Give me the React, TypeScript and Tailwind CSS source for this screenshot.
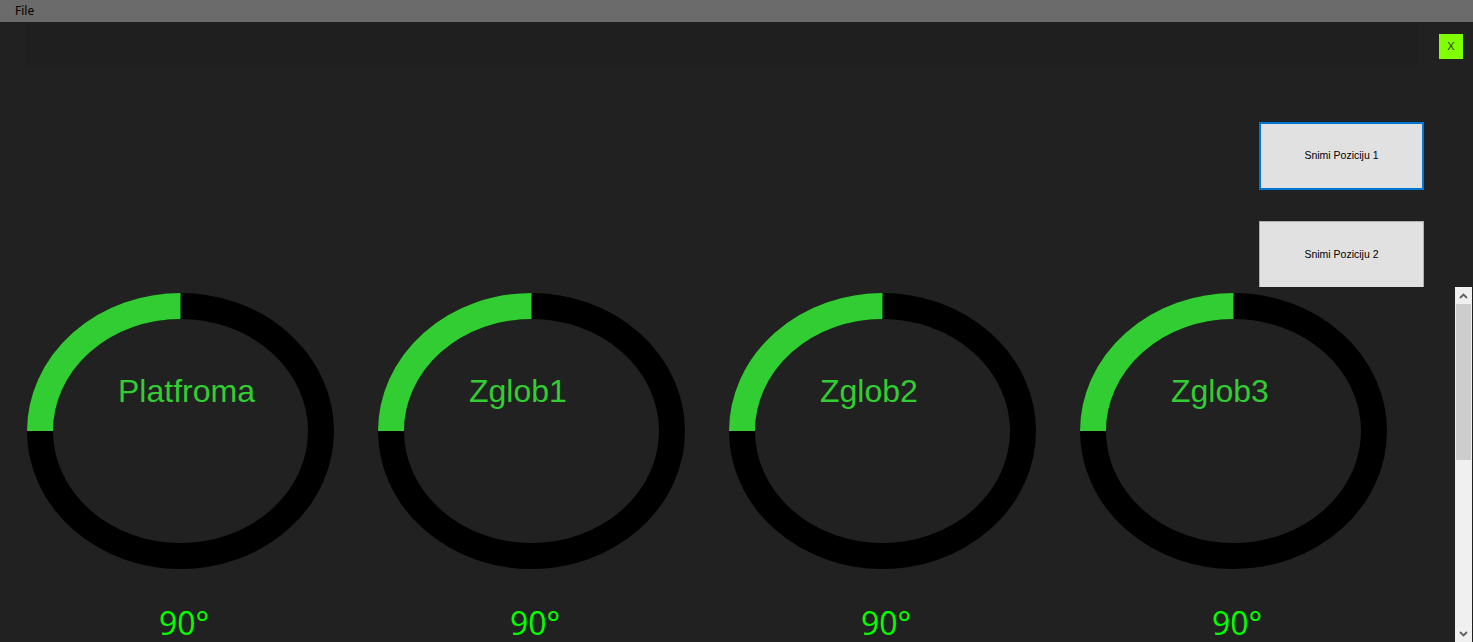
import React from "react";

const GREEN = "#32cd32";

function Gauge({ label }: { label: string }) {
  const w = 307;
  const h = 276;
  const cx = w / 2;
  const cy = h / 2;
  const rx = cx - 13;
  const ry = cy - 13;
  return (
    <div className="w-[351px] shrink-0 flex flex-col">
      <div className="relative w-[307px] h-[276px]">
        <svg className="absolute inset-0" width={w} height={h} viewBox={`0 0 ${w} ${h}`}>
          <ellipse cx={cx} cy={cy} rx={rx} ry={ry} fill="none" stroke="#000" strokeWidth={26} />
          <path
            d={`M ${cx - rx} ${cy} A ${rx} ${ry} 0 0 1 ${cx} ${cy - ry}`}
            fill="none"
            stroke={GREEN}
            strokeWidth={26}
            strokeLinecap="butt"
          />
        </svg>
        <div
          className="relative pt-[82px] pl-[91px] text-[32px] leading-none text-[#32cd32] whitespace-nowrap"
          style={{ fontFamily: '"Liberation Sans", Arial, sans-serif' }}
        >
          {label}
        </div>
      </div>
      <div
        className="mt-[38px] pl-[132px] text-[32px] leading-none text-[#00ff00] whitespace-nowrap"
        style={{ fontFamily: '"Open Sans", "Noto Sans", sans-serif' }}
      >
        90°
      </div>
    </div>
  );
}

function Chevron({ up }: { up: boolean }) {
  return (
    <svg width="9" height="6" viewBox="0 0 9 6">
      <path
        d={up ? "M1 5 L4.5 1.5 L8 5" : "M1 1 L4.5 4.5 L8 1"}
        fill="none"
        stroke="#606060"
        strokeWidth={1.8}
      />
    </svg>
  );
}

export default function App() {
  return (
    <div className="w-[1473px] h-[642px] bg-[#212121] overflow-hidden flex flex-col">
      {/* Menu bar */}
      <div className="h-[22px] shrink-0 bg-[#6b6b6b] flex items-center">
        <span
          className="ml-[15px] text-[12px] text-black leading-none"
          style={{ fontFamily: '"Noto Sans", "Open Sans", sans-serif' }}
        >
          File
        </span>
      </div>

      {/* Top area */}
      <div className="h-[265px] shrink-0 flex flex-col">
        <div className="flex h-[45px]">
          <div className="ml-[25px] w-[1393px] h-[45px] bg-[#1f1f1f]" />
          <button
            className="ml-[21px] mt-[12px] w-[24px] h-[25px] bg-[#7fff00] flex items-center justify-center text-[11px] text-[#333] leading-none"
            style={{ fontFamily: '"Liberation Sans", Arial, sans-serif' }}
          >
            X
          </button>
        </div>
        <div
          className="ml-[1259px] mt-[55px] flex flex-col gap-[31px] text-[10.5px] text-black"
          style={{ fontFamily: '"Liberation Sans", Arial, sans-serif' }}
        >
          <button className="w-[165px] h-[68px] bg-[#e1e1e1] border-2 border-[#0078d7] flex items-center justify-center">
            Snimi Poziciju 1
          </button>
          <button className="w-[165px] h-[66px] bg-[#e1e1e1] border border-b-0 border-[#adadad] flex items-center justify-center pt-[1px]">
            Snimi Poziciju 2
          </button>
        </div>
      </div>

      {/* Gauges panel */}
      <div className="flex-1 flex min-h-0">
        <div className="flex-1 flex pl-[27px] pt-[6px] overflow-hidden">
          <Gauge label="Platfroma" />
          <Gauge label="Zglob1" />
          <Gauge label="Zglob2" />
          <Gauge label="Zglob3" />
        </div>
        <div className="w-[17px] bg-[#f0f0f0] flex flex-col items-center">
          <div className="h-[17px] flex items-center justify-center">
            <Chevron up />
          </div>
          <div className="w-[15px] h-[156px] bg-[#cdcdcd]" />
          <div className="flex-1" />
          <div className="h-[17px] flex items-center justify-center">
            <Chevron up={false} />
          </div>
        </div>
        <div className="w-[1px] bg-[#212121]" />
      </div>
    </div>
  );
}
